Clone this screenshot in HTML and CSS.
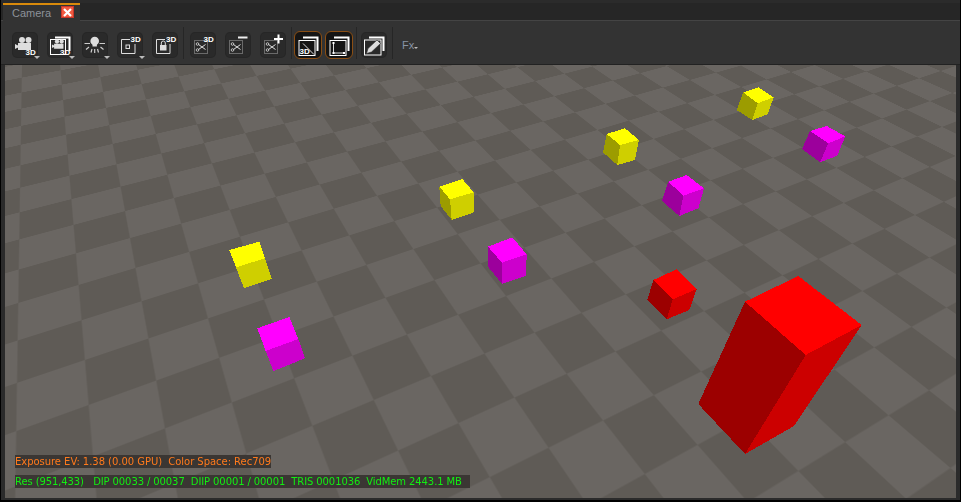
FILE: index.html
```html
<!DOCTYPE html>
<html>
  <head>
    <meta charset="utf-8" />
    <title>Camera</title>
    <link rel="stylesheet" href="styles.css">
  </head>
  <body>
    <svg class="defs" width="0" height="0">
      <symbol id="cam" viewBox="0 0 24 24">
        <circle cx="9" cy="7" r="3" fill="#ddd" />
        <circle cx="15.500" cy="7" r="3" fill="#ddd" />
        <path d="M5 10h13v7H5zM2 11l3 1.500v2L2 16z" fill="#ddd" />
      </symbol>
      <symbol id="backL" viewBox="0 0 24 24">
        <path d="M7 4.500H21.500V18" fill="none" stroke="#fff" stroke-width="2" />
      </symbol>
      <symbol id="scissors" viewBox="0 0 24 24">
        <rect x="3.500" y="7.500" width="13" height="13" fill="none" stroke="#aaa" stroke-dasharray="1 1" />
        <path d="M7.500 11.500l7 5M7.500 16.500l7-5" stroke="#ddd" />
        <circle cx="6.500" cy="11" r="1.300" fill="none" stroke="#ddd" stroke-width=".8" />
        <circle cx="6.500" cy="17" r="1.300" fill="none" stroke="#ddd" stroke-width=".8" />
      </symbol>
    </svg>

    <div class="window">
      <div class="tabbar">
        <div class="tab">
          <span>Camera</span>
          <span class="close">
            <svg width="9" height="9" viewBox="0 0 9 9"><path d="M1 1l7 7M8 1L1 8" stroke="#fff" stroke-width="2.200" /></svg>
          </span>
        </div>
      </div>

      <div class="toolbar">
        <button class="tool menu">
          <svg width="24" height="24" viewBox="0 0 24 24"><use href="#cam" width="24" height="24" /><text class="tag" x="12.500" y="21.500">3D</text></svg>
        </button>
        <button class="tool menu">
          <svg width="24" height="24" viewBox="0 0 24 24">
            <use href="#backL" width="24" height="24" />
            <rect x="2.500" y="6.500" width="15" height="15" fill="#2a2a2a" stroke="#fff" />
            <g transform="translate(2.500 3.500) scale(.72)"><use href="#cam" width="24" height="24" /></g>
            <text class="tag" x="12" y="21.500">3D</text>
          </svg>
        </button>
        <button class="tool menu">
          <svg width="24" height="24" viewBox="0 0 24 24">
            <circle cx="11.700" cy="8" r="4.300" fill="#ddd" />
            <path d="M9.500 11h4.400v2.500H9.500z" fill="#ddd" />
            <path d="M1.500 10.500H7M16.500 10.500H22M6 14l-3 2.500M17.500 14l3 2.500M9 16l-1 3.500M14.500 16l1 3.500M11.700 16v4" stroke="#ccc" stroke-width="1.200" fill="none" />
          </svg>
        </button>
        <button class="tool menu">
          <svg width="24" height="24" viewBox="0 0 24 24">
            <path d="M12 6.500H3.500V20.500H17V11" fill="none" stroke="#ddd" />
            <rect x="8" y="12" width="3.500" height="3.500" fill="none" stroke="#ddd" />
            <text class="tag" x="12.500" y="9">3D</text>
          </svg>
        </button>
        <button class="tool">
          <svg width="24" height="24" viewBox="0 0 24 24">
            <path d="M12 6.500H3.500V20.500H17V11" fill="none" stroke="#ddd" />
            <path d="M7 12h6.500v5.500H7z" fill="#ddd" />
            <path d="M8.300 12V10a2 2 0 0 1 4 0v2" fill="none" stroke="#ddd" />
            <text class="tag" x="13" y="9">3D</text>
          </svg>
        </button>
        <i class="sep"></i>
        <button class="tool">
          <svg width="24" height="24" viewBox="0 0 24 24"><use href="#scissors" width="24" height="24" /><text class="tag" x="12.500" y="9">3D</text></svg>
        </button>
        <button class="tool">
          <svg width="24" height="24" viewBox="0 0 24 24"><use href="#scissors" width="24" height="24" /><path d="M12 4.500h9.500" stroke="#eee" stroke-width="2" /></svg>
        </button>
        <button class="tool">
          <svg width="24" height="24" viewBox="0 0 24 24"><use href="#scissors" width="24" height="24" /><path d="M13 6h9M17.500 1.500v9" stroke="#fff" stroke-width="2" /></svg>
        </button>
        <i class="sep"></i>
        <div class="pair">
          <button class="tool on">
            <svg width="24" height="24" viewBox="0 0 24 24">
              <use href="#backL" width="24" height="24" />
              <rect x="3" y="7.500" width="16" height="15" fill="#151515" stroke="#fff" />
              <path d="M7 10.500l11 11" stroke="#ddd" />
              <text class="tag" x="3.500" y="21">3D</text>
            </svg>
          </button>
          <button class="tool on">
            <svg width="24" height="24" viewBox="0 0 24 24">
              <use href="#backL" width="24" height="24" />
              <rect x="3" y="7.500" width="16" height="15" fill="#151515" stroke="#fff" />
              <path d="M6.500 10v10H17" fill="none" stroke="#ddd" />
              <path d="M5.500 9h2v2h-2zM5.500 19h2v2h-2zM16 19h2v2h-2z" fill="#fff" />
            </svg>
          </button>
        </div>
        <i class="sep"></i>
        <button class="tool">
          <svg width="24" height="24" viewBox="0 0 24 24">
            <use href="#backL" width="24" height="24" />
            <rect x="2.500" y="7" width="16.500" height="15" fill="#2a2a2a" stroke="#fff" />
            <path d="M4.500 20.500l1.500-5L15 7l3.500 3.500-9 8.500z" fill="#ddd" stroke="#2a2a2a" stroke-width=".6" />
          </svg>
        </button>
        <i class="sep"></i>
        <span class="fx">Fx</span>
      </div>

      <div class="viewport">
        <div class="floor"></div>
        <svg class="scene" width="951" height="433" viewBox="5 65 951 433">
          <g class="yellow">
            <polygon class="top" points="743.300,92.300 758.300,87.300 773.700,97.300 757.700,103.300" />
            <polygon class="left" points="743.300,92.300 757.700,103.300 752.300,120 736.700,110" />
            <polygon class="right" points="757.700,103.300 773.700,97.300 767.700,114.300 752.300,120" />

            <polygon class="top" points="606.700,134 625,128.300 639,140 620,145" />
            <polygon class="left" points="606.700,134 620,145 617.300,165 603,152.300" />
            <polygon class="right" points="620,145 639,140 635,160 617.300,165" />

            <polygon class="top" points="439.300,186.700 462.300,179 473.700,192.300 450,199.300" />
            <polygon class="left" points="439.300,186.700 450,199.300 451.700,220 440.700,206" />
            <polygon class="right" points="450,199.300 473.700,192.300 474,212.300 451.700,220" />

            <polygon class="top" points="229.300,250 259.300,241.700 265,258.300 236,267.300" />
            <polygon class="right" points="236,267.300 265,258.300 272,279 244,288.300" />
          </g>
          <g class="magenta">
            <polygon class="top" points="810,131 826.700,126 845.300,136.300 828.300,143.300" />
            <polygon class="left" points="810,131 828.300,143.300 820,162.300 802,149" />
            <polygon class="right" points="828.300,143.300 845.300,136.300 837.300,155.700 820,162.300" />

            <polygon class="top" points="668.300,181.700 686.700,175 704,188.300 683.300,195.700" />
            <polygon class="left" points="668.300,181.700 683.300,195.700 679.300,216 662,201" />
            <polygon class="right" points="683.300,195.700 704,188.300 698.300,208.300 679.300,216" />

            <polygon class="top" points="488,246.700 512.300,237.300 526.700,254.300 502,262.700" />
            <polygon class="left" points="488,246.700 502,262.700 502,284 488,266.700" />
            <polygon class="right" points="502,262.700 526.700,254.300 526,275.700 502,284" />

            <polygon class="top" points="257.300,328.300 289.300,317 298.300,339 265.700,351" />
            <polygon class="right" points="265.700,351 298.300,339 305,358.300 273.300,371" />
          </g>
          <g class="red">
            <polygon class="top" points="653.300,280 676.700,269.300 696.700,289 672.700,299.300" />
            <polygon class="left" points="653.300,280 672.700,299.300 666.700,319.300 647.300,300" />
            <polygon class="right" points="672.700,299.300 696.700,289 689.300,310 666.700,319.300" />

            <polygon class="top" points="745,301.700 798.300,276 861.700,325 805.700,355" />
            <polygon class="left" points="745,301.700 805.700,355 745,454 698.300,404" />
            <polygon class="right" points="805.700,355 861.700,325 794,426 745,454" />
          </g>
        </svg>
        <div class="stats">
          <div class="stat exposure">Exposure EV: 1.38 (0.00 GPU)  Color Space: Rec709</div>
          <div class="stat res">Res (951,433)   DIP 00033 / 00037  DIIP 00001 / 00001  TRIS 0001036  VidMem 2443.1 MB</div>
        </div>
      </div>
    </div>
  </body>
</html>
```

FILE: styles.css
```css
html, body {
  margin: 0;
  height: 100%;
  background: #000;
  overflow: hidden;
}
.defs {
  position: absolute;
}
.window {
  height: 502px;
  box-sizing: border-box;
  padding-top: 3px;
  border: 1px solid #000;
  border-width: 0 1px 2px 1px;
  background: #2b2b2b;
  display: flex;
  flex-direction: column;
  font-family: "Liberation Sans", sans-serif;
}
.tabbar {
  height: 17px;
  border-bottom: 1px solid #444;
  background: #262626;
  display: flex;
  padding-left: 2px;
}
.tab {
  width: 77px;
  height: 18px;
  box-sizing: border-box;
  border-top: 2px solid #d98a0b;
  background: #333;
  color: #8d9299;
  font-size: 11px;
  line-height: 16px;
  padding-left: 9px;
  display: flex;
  gap: 10px;
}
.close {
  width: 13px;
  height: 12px;
  margin-top: 1px;
  background: #f0593f;
  border: 1px solid #c9362a;
  box-sizing: border-box;
  display: flex;
  align-items: center;
  justify-content: center;
}
.toolbar {
  height: 44px;
  box-sizing: border-box;
  background: #333;
  display: flex;
  align-items: center;
  padding: 5px 0 0 12px;
  gap: 11px;
  border-bottom: 1px solid #222;
}
.tool {
  position: relative;
  width: 24px;
  height: 24px;
  padding: 0;
  border: 0;
  border-radius: 4px;
  background: #2a2a2a;
  box-shadow: 0 0 0 1px #262626;
}
.tool svg {
  display: block;
}
.tool.menu::after {
  content: "";
  position: absolute;
  right: -3px;
  bottom: -2px;
  border: 3px solid transparent;
  border-top-color: #bbb;
  border-bottom: 0;
}
.tag {
  font-family: "Liberation Sans", sans-serif;
  font-size: 8px;
  font-weight: bold;
  fill: #fff;
}
.sep {
  width: 1px;
  height: 32px;
  background: #262626;
  margin: -5px -4px 0 -5px;
}
.pair {
  display: flex;
  gap: 3px;
  margin: -1px -3px 0 -5px;
}
.pair + .sep {
  margin-right: -6px;
}
.tool.on {
  box-sizing: content-box;
  padding: 1px;
  background: #151515;
  border: 1px solid #8a4e14;
  border-radius: 6px;
  box-shadow: none;
}
.fx {
  color: #8793a5;
  font-size: 11px;
  margin-left: 2px;
  position: relative;
}
.fx::after {
  content: "";
  position: absolute;
  left: 12px;
  bottom: 2px;
  border: 2.500px solid transparent;
  border-top-color: #bbb;
  border-bottom: 0;
}
.viewport {
  position: relative;
  overflow: hidden;
  width: 951px;
  height: 433px;
  margin-left: 4px;
  background: #65615d;
}
/* one element under a homography, vanishing points worked out from the grid */
.floor {
  position: absolute;
  left: 0;
  top: 0;
  width: 1120px;
  height: 960px;
  transform-origin: 0 0;
  transform: matrix3d(1.5073, -0.2728, 0, 0.0007335, -0.0316, 0.5253, 0, -0.001375, 0, 0, 1, 0, 311.7, 216.7, 0, 1) translate(-240px, -560px);
  background: conic-gradient(#6a6662 25%, #5f5b56 0 50%, #6a6662 0 75%, #5f5b56 0);
  background-size: 80px 80px;
  filter: blur(0.6px);
}
.scene {
  position: absolute;
  left: 0;
  top: 0;
  shape-rendering: crispEdges;
}
.yellow .top { fill: #ffff00; }
.yellow .left { fill: #9c9c00; }
.yellow .right { fill: #cfcf00; }
.magenta .top { fill: #ff00ff; }
.magenta .left { fill: #9c009c; }
.magenta .right { fill: #cc00cc; }
.red .top { fill: #ff0000; }
.red .left { fill: #9c0000; }
.red .right { fill: #cc0000; }
.stats {
  position: absolute;
  left: 10px;
  top: 390px;
  display: flex;
  flex-direction: column;
  align-items: flex-start;
  gap: 7px;
}
.stat {
  white-space: pre;
  font-family: "DejaVu Sans", sans-serif;
  font-size: 10px;
  height: 13px;
  line-height: 13px;
  background: #3a3633;
}
.exposure {
  color: #ff7a1c;
  letter-spacing: -0.04px;
}
.res {
  color: #12ee12;
  letter-spacing: -0.1px;
  padding-right: 8px;
}
```
